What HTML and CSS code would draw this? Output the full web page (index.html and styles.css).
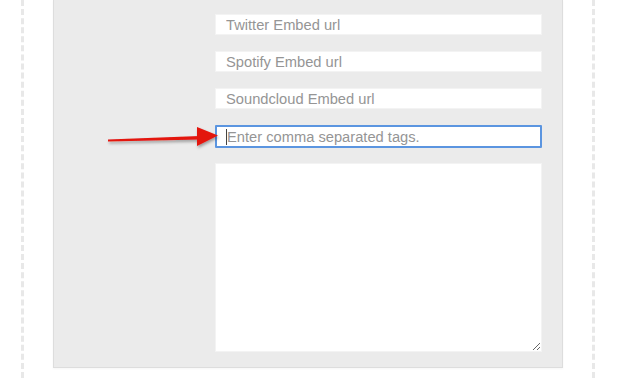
FILE: index.html
```html
<!DOCTYPE html>
<html lang="en">
<head>
    <meta charset="UTF-8">
    <title>Embed settings</title>
    <link rel="stylesheet" href="styles.css">
</head>
<body>
    <div class="page">
        <div class="panel">
            <input class="field" type="text" placeholder="Twitter Embed url">
            <input class="field" type="text" placeholder="Spotify Embed url">
            <input class="field" type="text" placeholder="Soundcloud Embed url">
            <div class="tags-wrap">
                <input class="field field-focus" type="text" placeholder="Enter comma separated tags.">
                <span class="caret"></span>
            </div>
            <textarea class="notes"></textarea>
        </div>
        <!-- annotation arrow -->
        <svg class="arrow" width="140" height="34" viewBox="0 0 140 34">
            <defs>
                <filter id="shadow" x="-10%" y="-30%" width="130%" height="180%">
                    <feDropShadow dx="1" dy="2" stdDeviation="1.5" flood-color="#000" flood-opacity="0.35"/>
                </filter>
            </defs>
            <g filter="url(#shadow)">
                <path d="M24 18.5 L116 15 L116 18.5 L24 20.5 Z" fill="#e3140f"/>
                <path d="M113 6 L134 14.5 L113 25 Z" fill="#e3140f"/>
            </g>
        </svg>
    </div>
</body>
</html>
```

FILE: styles.css
```css
body {
    margin: 0;
    background: #fff;
    font-family: 'Liberation Sans', Arial, sans-serif;
}

.page {
    position: relative;
    margin-left: 21px;
    width: 510px;
    height: 378px;
    padding: 0 29px;
    border-left: 3px dashed #e8e8e8;
    border-right: 3px dashed #e8e8e8;
}

.panel {
    box-sizing: border-box;
    width: 510px;
    background: #ebebeb;
    border: 1px solid #dddddd;
    border-top: none;
    box-shadow: 0 1px 2px rgba(0,0,0,0.04);
    padding: 14px 20px 15px 161px;
    display: flex;
    flex-direction: column;
    gap: 16px;
}

.field {
    box-sizing: border-box;
    width: 327px;
    height: 21px;
    margin: 0;
    padding: 0 10px;
    border: 1px solid #f3f3f3;
    background: #fff;
    font-family: inherit;
    font-size: 14.7px;
    color: #333;
    outline: none;
}
.field::placeholder {
    color: #959595;
}

.tags-wrap {
    position: relative;
    margin-bottom: -1px;
}

.field-focus {
    height: 23px;
    border: 2px solid #5b95e0;
    border-radius: 1px;
    padding-left: 10px;
}

.caret {
    position: absolute;
    left: 11px;
    top: 4px;
    width: 1px;
    height: 16px;
    background: #444;
}

.notes {
    box-sizing: border-box;
    display: block;
    width: 327px;
    height: 189px;
    margin: 0;
    border: 1px solid #f3f3f3;
    background: #fff;
    resize: both;
    outline: none;
}

.arrow {
    position: absolute;
    left: 60px;
    top: 121px;
}
```
